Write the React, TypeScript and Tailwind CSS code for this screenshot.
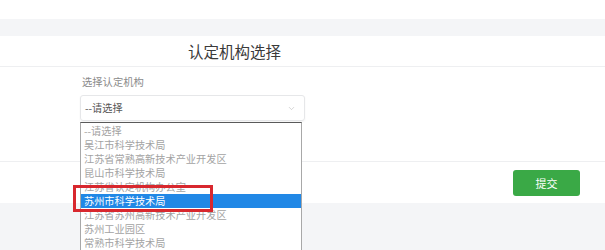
import React from 'react';
import { ChevronDown } from 'lucide-react';

const options = [
  '--请选择',
  '吴江市科学技术局',
  '江苏省常熟高新技术产业开发区',
  '昆山市科学技术局',
  '江苏省认定机构办公室',
  '苏州市科学技术局',
  '江苏省苏州高新技术产业开发区',
  '苏州工业园区',
  '常熟市科学技术局',
];

const selected = 5;

export default function App() {
  return (
    <div className="w-[605px] h-[250px] overflow-hidden bg-[#f4f5f7] font-['Noto_Sans_CJK_SC','Noto_Sans',sans-serif]">
      <div className="h-[19px] bg-white" />
      <div className="h-[17px]" />
      <div className="bg-white">
        {/* title */}
        <div className="h-[31px] border-b border-[#eeeff1] flex items-center pl-[188px]">
          <span className="text-[15.5px] leading-[20px] text-[#3a3a3a]">认定机构选择</span>
        </div>

        {/* form */}
        <div className="h-[94px] pl-[80px] pt-[8px]">
          <div className="pl-[2px] text-[10.3px] leading-[14px] text-[#8a8a8a]">选择认定机构</div>
          <div className="relative mt-[6px] w-[225px]">
            <div className="h-[26px] border border-[#e6e7e9] rounded-[3px] shadow-[0_1px_2px_rgba(0,0,0,0.05)] flex items-center justify-between pl-[4px] pr-[8px]">
              <span className="text-[10.2px] leading-[14px] text-[#555]">--请选择</span>
              <ChevronDown size={9} color="#b5b5b5" strokeWidth={1.5} />
            </div>

            {/* open dropdown list */}
            <div className="absolute left-0 top-[27px] z-10 w-[222px] h-[140px] bg-white border-x border-[#a8a8a8] border-t border-t-[#5a5a5a] pt-[1px]">
              {options.map((o, i) => (
                <div
                  key={o}
                  className={
                    i === selected
                      ? 'h-[14px] pl-[3px] text-[10.2px] leading-[14px] whitespace-nowrap bg-[#2188e6] text-white'
                      : 'h-[14px] pl-[3px] text-[10.2px] leading-[14px] whitespace-nowrap text-[#a3a3a3]'
                  }
                >
                  {o}
                </div>
              ))}
            </div>

            {/* red highlight annotation */}
            <div className="absolute left-[-7px] top-[90px] z-20 w-[140px] h-[27px] border-[3px] border-[#d8282e]" />
          </div>
        </div>

        {/* footer */}
        <div className="h-[42px] border-t border-[#eeeff1] flex items-center justify-end pr-[25px]">
          <button className="w-[67px] h-[26px] rounded-[3px] bg-[#3aa946] text-white text-[11px] leading-[14px]">
            提交
          </button>
        </div>
      </div>
    </div>
  );
}
